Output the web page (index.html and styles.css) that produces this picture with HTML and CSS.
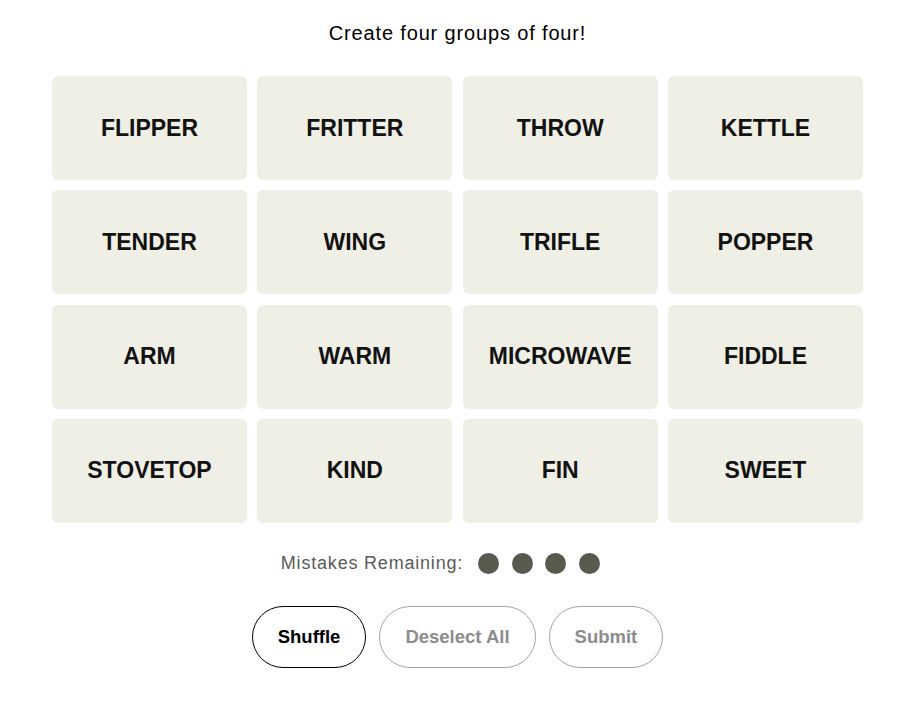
FILE: index.html
```html
<!DOCTYPE html>
<html lang="en">
<head>
<meta charset="utf-8">
<title>Connections</title>
<link rel="stylesheet" href="styles.css">
</head>
<body>
<main class="game">
  <p class="prompt">Create four groups of four!</p>
  <section class="board">
    <button class="tile">FLIPPER</button>
    <button class="tile">FRITTER</button>
    <button class="tile">THROW</button>
    <button class="tile">KETTLE</button>
    <button class="tile">TENDER</button>
    <button class="tile">WING</button>
    <button class="tile">TRIFLE</button>
    <button class="tile">POPPER</button>
    <button class="tile">ARM</button>
    <button class="tile">WARM</button>
    <button class="tile">MICROWAVE</button>
    <button class="tile">FIDDLE</button>
    <button class="tile">STOVETOP</button>
    <button class="tile">KIND</button>
    <button class="tile">FIN</button>
    <button class="tile">SWEET</button>
  </section>
  <div class="mistakes">
    <span class="mistakes-label">Mistakes Remaining:</span>
    <span class="dots">
      <span class="dot"></span><span class="dot"></span><span class="dot"></span><span class="dot"></span>
    </span>
  </div>
  <div class="actions">
    <button class="pill pill-active">Shuffle</button>
    <button class="pill pill-disabled">Deselect All</button>
    <button class="pill pill-disabled">Submit</button>
  </div>
</main>
</body>
</html>
```

FILE: styles.css
```css
* { box-sizing: border-box; }
html, body { margin: 0; padding: 0; background: #fff; }
body {
  font-family: "Liberation Sans", Arial, sans-serif;
  color: #000;
}
.game {
  width: 811px;
  margin-left: 52px;
  display: flex;
  flex-direction: column;
  align-items: center;
}
.prompt {
  margin: 21px 0 0;
  font-size: 20px;
  line-height: 24px;
  letter-spacing: 0.85px;
}
.board {
  margin-top: 31px;
  width: 811px;
  display: grid;
  grid-template-columns: repeat(4, 1fr);
  grid-auto-rows: 104px;
  column-gap: 10.33px;
  row-gap: 10.33px;
}
.tile {
  border: none;
  border-radius: 6px;
  background: #efefe6;
  color: #121212;
  font-family: "Liberation Sans", Arial, sans-serif;
  font-weight: 700;
  font-size: 23px;
  padding: 0;
  display: flex;
  align-items: center;
  justify-content: center;
}
.mistakes {
  margin-top: 30px;
  padding-right: 34px;
  display: flex;
  align-items: center;
  gap: 15px;
  height: 22px;
}
.mistakes-label {
  font-size: 18px;
  letter-spacing: 0.8px;
  color: #5a5a5a;
}
.dots {
  display: flex;
  gap: 12.7px;
}
.dot {
  width: 21px;
  height: 21px;
  border-radius: 50%;
  background: #5a594e;
}
.actions {
  margin-top: 31px;
  display: flex;
  gap: 13px;
}
.pill {
  height: 62px;
  padding: 0 25px;
  border-radius: 31px;
  background: #fff;
  font-family: "Liberation Sans", Arial, sans-serif;
  font-weight: 700;
  font-size: 18.5px;
}
.pill-active {
  border: 1px solid #000;
  color: #000;
}
.pill-disabled {
  border: 1px solid #a3a3a3;
  color: #8c8c8c;
}
```
